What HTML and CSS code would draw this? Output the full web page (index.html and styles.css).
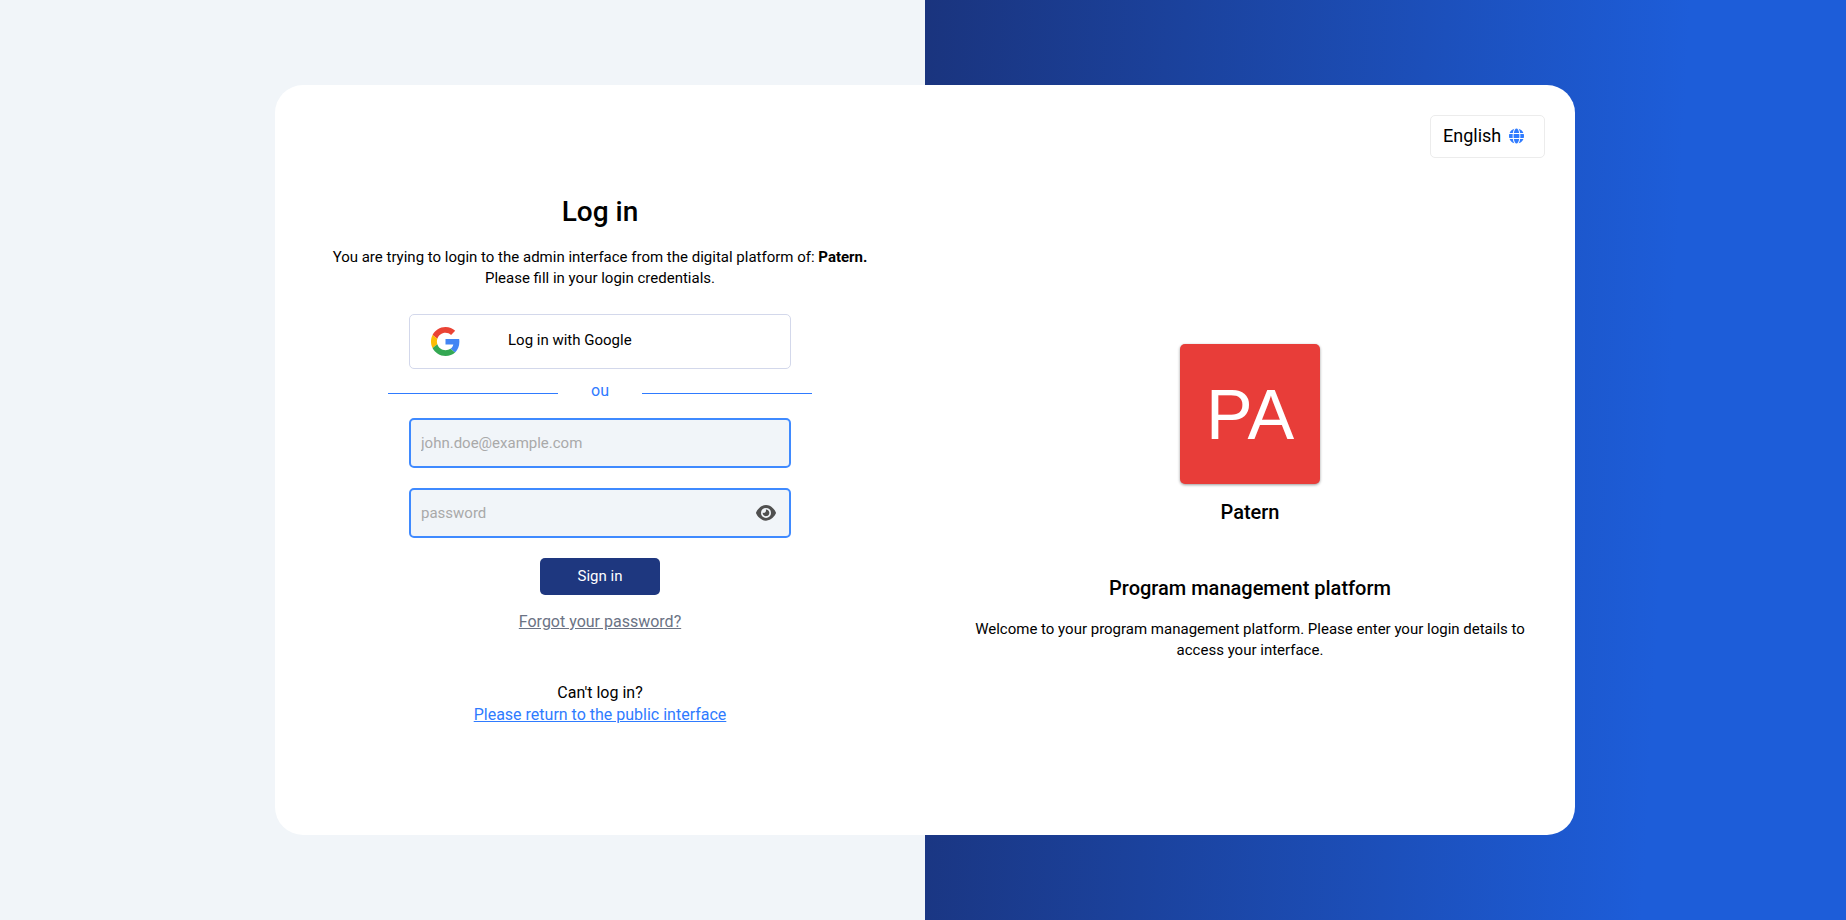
FILE: index.html
```html
<!DOCTYPE html>
<html lang="en">
<head>
  <meta charset="UTF-8">
  <meta name="viewport" content="width=device-width, initial-scale=1.0">
  <title>Log in</title>
  <link rel="stylesheet" href="styles.css">
</head>
<body>

  <main class="page">
    <div class="card">

      <!-- Login form -->
      <section class="login">
        <h1>Log in</h1>
        <p class="intro">You are trying to login to the admin interface from the digital platform of: <strong>Patern.</strong><br>Please fill in your login credentials.</p>

        <button type="button" class="google-btn">
          <svg class="google-icon" viewBox="0 0 48 48" aria-hidden="true">
            <path fill="#EA4335" d="M24 9.5c3.54 0 6.71 1.22 9.21 3.6l6.85-6.85C35.9 2.38 30.47 0 24 0 14.62 0 6.51 5.38 2.56 13.22l7.98 6.19C12.43 13.72 17.74 9.5 24 9.5z"/>
            <path fill="#4285F4" d="M46.98 24.55c0-1.57-.15-3.09-.38-4.55H24v9.02h12.94c-.58 2.96-2.26 5.48-4.78 7.18l7.73 6c4.51-4.18 7.09-10.36 7.09-17.65z"/>
            <path fill="#FBBC05" d="M10.53 28.59c-.48-1.45-.76-2.99-.76-4.59s.27-3.14.76-4.59l-7.98-6.19C.92 16.46 0 20.12 0 24c0 3.88.92 7.54 2.56 10.78l7.97-6.19z"/>
            <path fill="#34A853" d="M24 48c6.48 0 11.93-2.13 15.89-5.81l-7.73-6c-2.15 1.45-4.92 2.3-8.16 2.3-6.26 0-11.57-4.22-13.47-9.91l-7.98 6.19C6.51 42.62 14.62 48 24 48z"/>
          </svg>
          <span>Log in with Google</span>
        </button>

        <div class="divider"><span>ou</span></div>

        <form class="login-form">
          <input type="email" class="field" aria-label="Email" placeholder="john.doe@example.com">
          <div class="password">
            <input type="password" class="field" aria-label="Password" placeholder="password">
            <button type="button" class="eye-btn" aria-label="Show password">
              <svg viewBox="0 0 576 512" aria-hidden="true">
                <path fill="currentColor" d="M288 32c-80.800 0-145.500 36.800-192.600 80.600C48.600 156 17.300 208 2.500 243.700c-3.300 7.900-3.300 16.700 0 24.600C17.300 304 48.600 356 95.400 399.400C142.500 443.200 207.200 480 288 480s145.500-36.800 192.600-80.600c46.800-43.500 78.100-95.400 93-131.100c3.300-7.900 3.300-16.700 0-24.600c-14.900-35.700-46.200-87.700-93-131.100C433.500 68.800 368.800 32 288 32zM144 256a144 144 0 1 1 288 0 144 144 0 1 1-288 0zm144-64c0 35.300-28.700 64-64 64c-7.100 0-13.900-1.200-20.300-3.300c-5.500-1.800-11.900 1.600-11.700 7.400c.3 6.900 1.300 13.800 3.200 20.700c13.700 51.200 66.400 81.600 117.600 67.900s81.600-66.400 67.900-117.600c-11.100-41.500-47.800-69.400-88.600-71.100c-5.800-.2-9.200 6.100-7.400 11.700c2.100 6.400 3.300 13.200 3.300 20.300z"/>
              </svg>
            </button>
          </div>
          <button type="submit" class="submit-btn">Sign in</button>
        </form>

        <a href="#" class="forgot">Forgot your password?</a>

        <p class="help">Can't log in?<br><a href="#">Please return to the public interface</a></p>
      </section>

      <!-- Platform presentation -->
      <section class="platform">
        <div class="language">
          <select aria-label="Language">
            <option>English</option>
          </select>
          <svg class="globe" viewBox="0 0 496 512" aria-hidden="true">
            <path fill="currentColor" d="M336.5 160C322 70.7 287.8 8 248 8s-74 62.7-88.5 152h177zM152 256c0 22.2 1.2 43.5 3.3 64h185.3c2.1-20.5 3.3-41.8 3.3-64s-1.2-43.5-3.3-64H155.3c-2.1 20.5-3.3 41.8-3.3 64zm324.7-96c-28.6-67.9-86.5-120.4-158-141.6 24.4 33.8 41.2 84.7 50 141.6h108zM177.2 18.4C105.8 39.6 47.8 92.1 19.3 160h108c8.7-56.9 25.5-107.8 49.9-141.6zM487.4 192H372.7c2.1 21 3.3 42.5 3.3 64s-1.2 43-3.3 64h114.6c5.5-20.5 8.6-41.8 8.6-64s-3.1-43.5-8.5-64zM120 256c0-21.5 1.2-43 3.3-64H8.6C3.2 212.500 0 233.800 0 256s3.200 43.500 8.600 64h114.600c-2-21-3.200-42.500-3.200-64zm39.500 96c14.500 89.300 48.700 152 88.500 152s74-62.700 88.500-152h-177zm159.300 141.600c71.400-21.200 129.400-73.700 158-141.600h-108c-8.800 56.900-25.600 107.800-50 141.600zM19.300 352c28.600 67.900 86.500 120.400 158 141.600-24.400-33.800-41.200-84.700-50-141.600h-108z"/>
          </svg>
        </div>

        <div class="platform-info">
          <div class="logo">PA</div>
          <h2 class="platform-name">Patern</h2>
          <h2>Program management platform</h2>
          <p>Welcome to your program management platform. Please enter your login details to access your interface.</p>
        </div>
      </section>

    </div>
  </main>

</body>
</html>
```
FILE: styles.css
```css
* {
  box-sizing: border-box;
}

body {
  margin: 0;
  font-family: Roboto, sans-serif;
  font-size: 15px;
  line-height: 21px;
  color: #000;
  background-color: #f1f5f9;
}

h1, h2, p {
  margin: 0;
}

button, input, select {
  font-family: inherit;
  font-size: inherit;
}

/* Page */
.page {
  min-height: 100vh;
  padding: 40px 0 40px 4px;
  display: flex;
  align-items: center;
  justify-content: center;
  background: linear-gradient(93deg, #1a347e, #1d5dd9 79%) right / calc(50% - 2px) 100% no-repeat;
}

.card {
  width: 1300px;
  max-width: 100%;
  min-height: 750px;
  display: grid;
  grid-template-columns: 1fr 1fr;
  background: #fff;
  border-radius: 28px;
}

/* Login form */
.login {
  padding: 109px 40px 40px;
  display: flex;
  flex-direction: column;
  align-items: center;
  text-align: center;
}

h1 {
  font-size: 28px;
  line-height: 36px;
  font-weight: 500;
}

.intro {
  margin-top: 17px;
}

.google-btn {
  width: 100%;
  max-width: 382px;
  height: 55px;
  margin-top: 25px;
  padding: 0 21px;
  display: flex;
  align-items: center;
  gap: 48px;
  background: #fff;
  border: 1px solid #d3d8eb;
  border-radius: 5px;
  color: #000;
  cursor: pointer;
}

.google-btn span {
  padding-bottom: 3px;
}

.google-icon {
  width: 29px;
  height: 29px;
}

.divider {
  width: 100%;
  max-width: 424px;
  height: 49px;
  display: flex;
  align-items: center;
  justify-content: space-between;
  color: #2f7bff;
  font-size: 16px;
}

.divider span {
  padding-bottom: 6px;
}

.divider::before,
.divider::after {
  content: "";
  width: 40%;
  border-top: 1px solid #2f7bff;
}

.login-form {
  width: 100%;
  max-width: 382px;
  display: flex;
  flex-direction: column;
  align-items: center;
  gap: 20px;
}

.field {
  width: 100%;
  height: 50px;
  padding: 0 10px;
  background: #f1f5f9;
  border: 2px solid #3f8aff;
  border-radius: 5px;
}

.field::placeholder {
  color: #a9a9a9;
}

.password {
  position: relative;
  width: 100%;
  display: flex;
}

.password .field {
  padding-right: 48px;
}

.eye-btn {
  position: absolute;
  top: 0;
  right: 10px;
  width: 30px;
  height: 50px;
  padding: 0 5px;
  display: flex;
  align-items: center;
  background: none;
  border: none;
  color: #505050;
  cursor: pointer;
}

.submit-btn {
  width: 120px;
  height: 37px;
  padding: 0 0 2px;
  background: #1e377f;
  border: none;
  border-radius: 5px;
  color: #fff;
  cursor: pointer;
}

.forgot {
  margin-top: 16px;
  font-size: 16px;
  line-height: 22px;
  color: #6b7385;
}

.help {
  margin-top: 49px;
  font-size: 16px;
  line-height: 22px;
}

.help a {
  color: #2f7bff;
}

/* Platform presentation */
.platform {
  padding: 30px;
  display: flex;
  flex-direction: column;
  align-items: center;
  text-align: center;
}

.language {
  align-self: flex-end;
  height: 43px;
  padding: 0 20px 2px 12px;
  display: flex;
  align-items: center;
  gap: 7px;
  border: 1px solid #ececec;
  border-radius: 5px;
}

.language select {
  appearance: none;
  padding: 0;
  background: none;
  border: none;
  color: #000;
  font-size: 18px;
}

.globe {
  width: 15px;
  height: 16px;
  color: #2f7bff;
}

.platform-info {
  padding: 186px 10px 0;
  display: flex;
  flex-direction: column;
  align-items: center;
}

.logo {
  width: 140px;
  height: 140px;
  padding-top: 2px;
  display: flex;
  align-items: center;
  justify-content: center;
  background: #e83d39;
  border-radius: 5px;
  box-shadow: 0 1px 3px rgba(0, 0, 0, 0.4);
  color: #fff;
  font-family: "Liberation Sans", Arial, sans-serif;
  font-size: 70px;
}

h2 {
  font-size: 20px;
  line-height: 28px;
  font-weight: 500;
}

.platform-name {
  margin: 14px 0 48px;
}

.platform-info p {
  margin-top: 17px;
}
```
